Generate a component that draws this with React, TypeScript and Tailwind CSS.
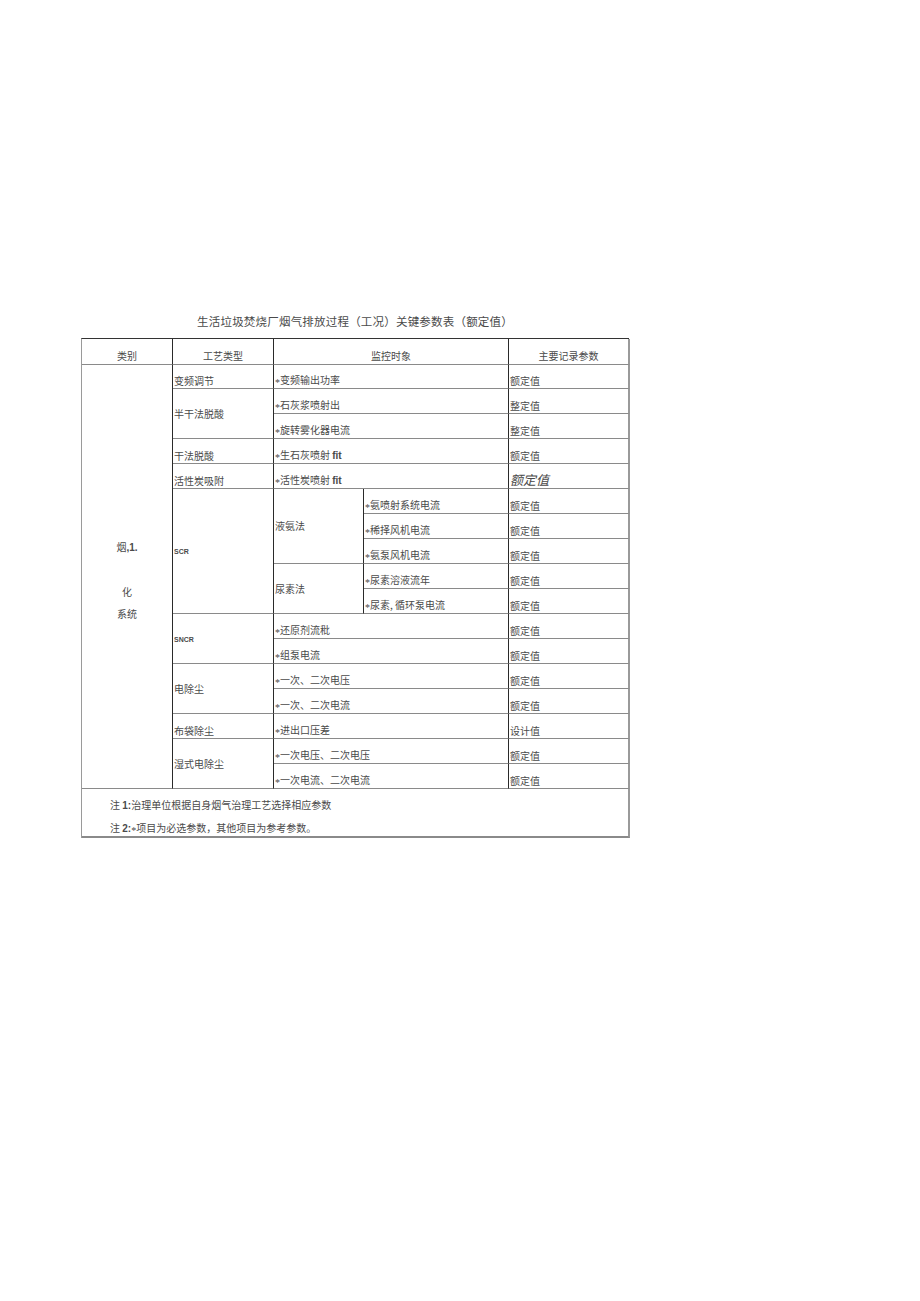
const cjk = { fontFamily: '"Noto Sans CJK SC", "Liberation Sans", sans-serif' }

type Cell = {
  text: React.ReactNode
  col: string
  row: string
  middle?: boolean
  last?: boolean
}

const B = ({ children }: { children: React.ReactNode }) => (
  <span className="font-bold" style={{ fontFamily: '"Liberation Sans", Arial, sans-serif' }}>
    {children}
  </span>
)

// the asterisk in the source sits at mid height
const Star = () => (
  <span className="relative top-[2px]" style={{ fontFamily: '"Liberation Serif", serif' }}>
    *
  </span>
)

const s = (t: string) => (
  <>
    <Star />
    {t}
  </>
)

const cells: Cell[] = [
  // 工艺类型
  { text: '变频调节', col: 'col-start-2', row: 'row-start-2' },
  { text: '半干法脱酸', col: 'col-start-2', row: 'row-start-3 row-span-2', middle: true },
  { text: '干法脱酸', col: 'col-start-2', row: 'row-start-5' },
  { text: '活性炭吸附', col: 'col-start-2', row: 'row-start-6' },
  { text: <span className="text-[7px]"><B>SCR</B></span>, col: 'col-start-2', row: 'row-start-7 row-span-5', middle: true },
  { text: <span className="text-[7px]"><B>SNCR</B></span>, col: 'col-start-2', row: 'row-start-12 row-span-2', middle: true },
  { text: '电除尘', col: 'col-start-2', row: 'row-start-14 row-span-2', middle: true },
  { text: '布袋除尘', col: 'col-start-2', row: 'row-start-16' },
  { text: '湿式电除尘', col: 'col-start-2', row: 'row-start-17 row-span-2', middle: true },

  // 监控时象
  { text: s('变频输出功率'), col: 'col-start-3 col-span-2', row: 'row-start-2' },
  { text: s('石灰浆喷射出'), col: 'col-start-3 col-span-2', row: 'row-start-3' },
  { text: s('旋转雾化器电流'), col: 'col-start-3 col-span-2', row: 'row-start-4' },
  { text: <><Star />生石灰喷射&nbsp;<B>fit</B></>, col: 'col-start-3 col-span-2', row: 'row-start-5' },
  { text: <><Star />活性炭喷射&nbsp;<B>fit</B></>, col: 'col-start-3 col-span-2', row: 'row-start-6' },
  { text: '液氨法', col: 'col-start-3', row: 'row-start-7 row-span-3', middle: true },
  { text: '尿素法', col: 'col-start-3', row: 'row-start-10 row-span-2', middle: true },
  { text: s('氨喷射系统电流'), col: 'col-start-4', row: 'row-start-7' },
  { text: s('稀择风机电流'), col: 'col-start-4', row: 'row-start-8' },
  { text: s('氨泵风机电流'), col: 'col-start-4', row: 'row-start-9' },
  { text: s('尿素溶液流年'), col: 'col-start-4', row: 'row-start-10' },
  { text: s('尿素, 循环泵电流'), col: 'col-start-4', row: 'row-start-11' },
  { text: s('还原剂流秕'), col: 'col-start-3 col-span-2', row: 'row-start-12' },
  { text: s('组泵电流'), col: 'col-start-3 col-span-2', row: 'row-start-13' },
  { text: s('一次、二次电压'), col: 'col-start-3 col-span-2', row: 'row-start-14' },
  { text: s('一次、二次电流'), col: 'col-start-3 col-span-2', row: 'row-start-15' },
  { text: s('进出口压差'), col: 'col-start-3 col-span-2', row: 'row-start-16' },
  { text: s('一次电压、二次电压'), col: 'col-start-3 col-span-2', row: 'row-start-17' },
  { text: s('一次电流、二次电流'), col: 'col-start-3 col-span-2', row: 'row-start-18' },

  // 主要记录参数
  { text: '额定值', col: 'col-start-5', row: 'row-start-2', last: true },
  { text: '整定值', col: 'col-start-5', row: 'row-start-3', last: true },
  { text: '整定值', col: 'col-start-5', row: 'row-start-4', last: true },
  { text: '额定值', col: 'col-start-5', row: 'row-start-5', last: true },
  { text: <span className="text-[13px] italic">额定值</span>, col: 'col-start-5', row: 'row-start-6', last: true },
  { text: '额定值', col: 'col-start-5', row: 'row-start-7', last: true },
  { text: '额定值', col: 'col-start-5', row: 'row-start-8', last: true },
  { text: '额定值', col: 'col-start-5', row: 'row-start-9', last: true },
  { text: '额定值', col: 'col-start-5', row: 'row-start-10', last: true },
  { text: '额定值', col: 'col-start-5', row: 'row-start-11', last: true },
  { text: '额定值', col: 'col-start-5', row: 'row-start-12', last: true },
  { text: '额定值', col: 'col-start-5', row: 'row-start-13', last: true },
  { text: '额定值', col: 'col-start-5', row: 'row-start-14', last: true },
  { text: '额定值', col: 'col-start-5', row: 'row-start-15', last: true },
  { text: '设计值', col: 'col-start-5', row: 'row-start-16', last: true },
  { text: '额定值', col: 'col-start-5', row: 'row-start-17', last: true },
  { text: '额定值', col: 'col-start-5', row: 'row-start-18', last: true },
]

const headers = [
  { text: '类别', col: 'col-start-1', last: false },
  { text: '工艺类型', col: 'col-start-2', last: false },
  { text: '监控时象', col: 'col-start-3 col-span-2', last: false },
  { text: '主要记录参数', col: 'col-start-5', last: true },
]

export default function App() {
  return (
    <div className="min-h-[1301px] w-[920px] bg-white text-[#4a4a4a]" style={cjk}>
      <div className="ml-[81px] w-[548px] pt-[313px]">
        <h1 className="mb-[9px] text-center text-[11.5px] leading-[16px] font-normal tracking-[0.2px]">
          生活垃圾焚烧厂烟气排放过程（工况）关键参数表（额定值）
        </h1>

        <div className="grid grid-cols-[91px_101px_90px_145px_121px] grid-rows-[26px_24px_repeat(16,25px)_49px] border-t border-t-[#333] border-l border-l-[#9a9a9a] text-[10px] leading-[14px]">
          {headers.map((h) => (
            <div
              key={h.text}
              className={`${h.col} row-start-1 flex items-end justify-center pb-[1px] border-b border-b-[#8a8a8a] ${
                h.last ? 'border-r-2 border-r-[#9a9a9a]' : 'border-r border-r-[#2a2a2a]'
              }`}
            >
              {h.text}
            </div>
          ))}

          {/* 类别 */}
          <div className="col-start-1 row-start-2 row-span-17 flex flex-col items-center justify-center pt-[7px] leading-[22px] border-r border-r-[#2a2a2a] border-b border-b-[#8a8a8a]">
            <span>
              烟<B>,1.</B>
            </span>
            <span>&nbsp;</span>
            <span>化</span>
            <span>系统</span>
          </div>

          {cells.map((c, i) => (
            <div
              key={i}
              className={`${c.col} ${c.row} flex ${c.middle ? 'items-center' : 'items-end'} whitespace-nowrap pl-[1px] border-b border-b-[#8a8a8a] ${
                c.last ? 'border-r-2 border-r-[#9a9a9a]' : 'border-r border-r-[#2a2a2a]'
              }`}
            >
              <span>{c.text}</span>
            </div>
          ))}

          {/* 注 */}
          <div className="col-span-5 row-start-19 flex flex-col justify-center gap-[8px] pl-[28px] pt-[9px] border-b-2 border-b-[#8a8a8a] border-r-2 border-r-[#9a9a9a]">
            <div>
              注 <B>1:</B>治理单位根据自身烟气治理工艺选择相应参数
            </div>
            <div>
              注 <B>2:</B>
              <Star />
              项目为必选参数，其他项目为参考参数。
            </div>
          </div>
        </div>
      </div>
    </div>
  )
}
